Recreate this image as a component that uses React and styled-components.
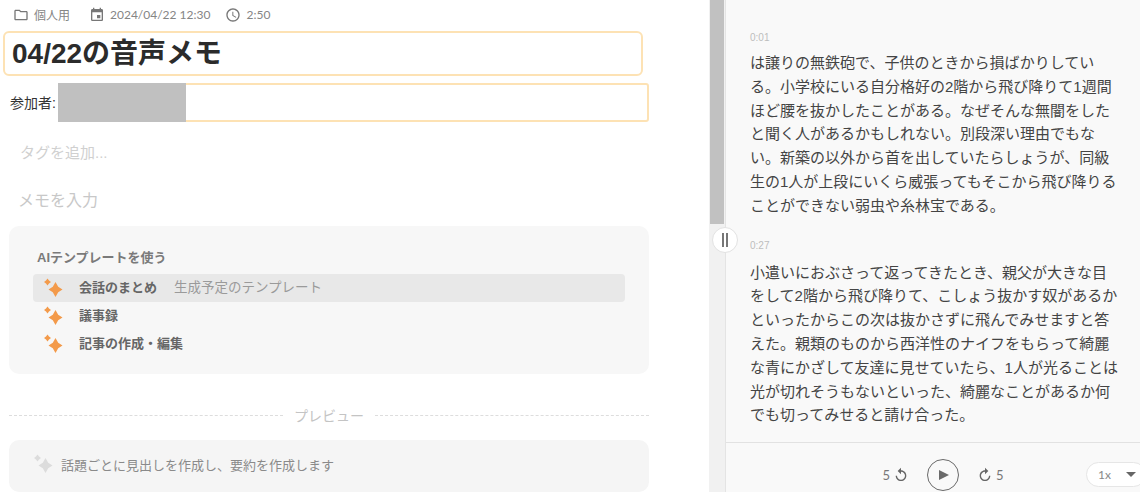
import styled, { createGlobalStyle } from "styled-components";
import { MdOutlineFolder, MdEvent, MdOutlineAccessTime, MdReplay } from "react-icons/md";

const JP = `"Liberation Sans", "Noto Sans CJK JP", sans-serif`;
const LATO = `Lato, "Noto Sans CJK JP", sans-serif`;

const GlobalStyle = createGlobalStyle`
  html, body {
    margin: 0;
    height: 492px;
    overflow: hidden;
    background: #fff;
  }
`;

const Page = styled.div`
  display: flex;
  width: 1140px;
  height: 492px;
  overflow: hidden;
  position: relative;
  font-family: ${JP};
`;

const LeftPane = styled.div`
  flex: 0 0 709px;
  height: 492px;
  overflow: hidden;
  box-sizing: border-box;
  display: flex;
  flex-direction: column;
`;

const MetaRow = styled.div`
  display: flex;
  align-items: center;
  height: 31px;
  padding: 0 0 2px 13px;
  box-sizing: border-box;
  font-family: ${LATO};
  font-size: 12px;
  color: #858585;
`;

const MetaItem = styled.span`
  display: flex;
  align-items: center;
  gap: 5px;
  margin-right: ${(props) => props.$gap || 20}px;

  svg {
    font-size: 16px;
    color: #777;
  }
`;

const TitleBox = styled.div`
  margin-left: 3px;
  width: 640px;
  height: 45px;
  box-sizing: border-box;
  border: 2px solid #fde2b4;
  border-radius: 6px;
  padding: 0 0 5px 7px;
  display: flex;
  align-items: center;
  font-size: 28px;
  font-weight: 700;
  color: #2b2b2b;
`;

const ParticipantRow = styled.div`
  display: flex;
  align-items: center;
  margin-top: 7px;
  padding-left: 10px;
  font-size: 14px;
  color: #333;
`;

const ParticipantLabel = styled.span`
  flex: 0 0 48px;
  padding-bottom: 2px;
  white-space: nowrap;
`;

const ParticipantBox = styled.div`
  position: relative;
  width: 591px;
  height: 39px;
  box-sizing: border-box;
  border: 2px solid #fde2b4;
  border-radius: 3px;
`;

const Redaction = styled.div`
  position: absolute;
  left: -2px;
  top: -2px;
  width: 128px;
  height: 39px;
  background: #c0c0c0;
`;

const TagInput = styled.div`
  margin: 21px 0 0 20px;
  height: 20px;
  line-height: 20px;
  font-size: 15px;
  color: #d0d0d0;
`;

const MemoInput = styled.div`
  margin: 28px 0 0 18px;
  height: 20px;
  line-height: 20px;
  font-size: 16px;
  color: #c8c8c8;
`;

const TemplateCard = styled.div`
  margin: 15px 0 0 9px;
  width: 640px;
  height: 148px;
  box-sizing: border-box;
  padding: 23px 24px 0;
  background: #f7f7f7;
  border-radius: 10px;
`;

const TemplateHeading = styled.div`
  margin-left: 4px;
  height: 18px;
  line-height: 18px;
  font-size: 13px;
  font-weight: 700;
  color: #7a7a7a;
  margin-bottom: 7px;
`;

const TemplateRow = styled.div`
  display: flex;
  align-items: center;
  height: 28px;
  padding-left: 10px;
  border-radius: 4px;
  background: ${(props) => (props.$active ? "#e8e8e8" : "transparent")};
`;

const TemplateName = styled.span`
  margin-left: 16px;
  padding-bottom: 4px;
  font-size: 13px;
  font-weight: 700;
  color: #666;
`;

const TemplateHint = styled.span`
  margin-left: 17px;
  padding-bottom: 4px;
  font-size: 13.5px;
  color: #9a9a9a;
`;

const Divider = styled.div`
  display: flex;
  align-items: center;
  gap: 11px;
  margin: 31px 0 0 9px;
  width: 640px;
  height: 20px;
  font-size: 14px;
  color: #c4c4c4;

  &::before,
  &::after {
    content: "";
    flex: 1;
    border-top: 1px dashed #ddd;
  }
`;

const PreviewCard = styled.div`
  display: flex;
  align-items: center;
  gap: 8px;
  margin: 15px 0 0 9px;
  width: 640px;
  height: 52px;
  flex: 0 0 52px;
  box-sizing: border-box;
  padding: 0 0 4px 24px;
  background: #f5f5f5;
  border-radius: 10px;
  font-size: 13px;
  color: #8a8a8a;
`;

const ScrollTrack = styled.div`
  flex: 0 0 16px;
  height: 492px;
  background: #f1f1f1;
`;

const ScrollThumb = styled.div`
  margin-left: 1px;
  width: 14px;
  height: 224px;
  background: #c1c1c1;
`;

const RightPane = styled.div`
  flex: 0 0 434px;
  height: 492px;
  border-left: 1px solid #e4e4e4;
  background: #f9f9f9;
  display: flex;
  flex-direction: column;
`;

const Transcript = styled.div`
  flex: 1;
  min-height: 0;
  overflow: hidden;
  padding: 31px 0 0 24px;
`;

const Segment = styled.div`
  width: 371px;
  margin-bottom: 21px;
`;

const Timestamp = styled.div`
  height: 14px;
  line-height: 14px;
  font-size: 10px;
  color: #bdbdbd;
  margin-bottom: ${(props) => props.$gap}px;
`;

const SegmentText = styled.p`
  margin: 0;
  font-size: 15px;
  line-height: 23.8px;
  color: #444;
`;

const ResizeHandle = styled.div`
  position: absolute;
  left: 712px;
  top: 227px;
  width: 26px;
  height: 26px;
  box-sizing: border-box;
  border: 1px solid #e2e2e2;
  border-radius: 50%;
  background: #fff;
  display: flex;
  align-items: center;
  justify-content: center;
  gap: 2px;

  i {
    width: 2px;
    height: 14px;
    background: #777;
  }
`;

const PlayerBar = styled.div`
  flex: 0 0 50px;
  box-sizing: border-box;
  border-top: 1px solid #e2e2e2;
  padding-top: 14px;
  position: relative;
  display: flex;
  align-items: center;
  justify-content: center;
  gap: 18px;
  font-family: ${LATO};
  font-size: 13px;
  color: #777;
`;

const SkipGroup = styled.span`
  display: flex;
  align-items: center;
  gap: 3px;

  svg {
    font-size: 16px;
    color: #666;
    transform: ${(props) => (props.$flip ? "scaleX(-1)" : "none")};
  }
`;

const PlayButton = styled.div`
  width: 32px;
  height: 32px;
  box-sizing: border-box;
  border: 1.5px solid #6a6a6a;
  border-radius: 50%;
  display: flex;
  align-items: center;
  justify-content: center;
  padding-left: 2px;

  &::before {
    content: "";
    border-left: 10px solid #6a6a6a;
    border-top: 5.5px solid transparent;
    border-bottom: 5.5px solid transparent;
  }
`;

const SpeedPill = styled.div`
  position: absolute;
  left: 360px;
  top: 19px;
  width: 60px;
  height: 25px;
  box-sizing: border-box;
  border: 1px solid #e6e6e6;
  border-radius: 13px;
  background: #fff;
  display: flex;
  align-items: center;
  padding-left: 11px;
  gap: 15px;
  font-size: 12px;
  color: #888;

  &::after {
    content: "";
    border-top: 5px solid #666;
    border-left: 5px solid transparent;
    border-right: 5px solid transparent;
  }
`;

const Sparkle = ({ color }) => (
  <svg width="20" height="20" viewBox="0 0 20 20" style={{ flex: "none" }}>
    <path d="M12.5 4 L15.2 8.8 L19.5 11.5 L15.2 14.2 L12.5 19 L9.8 14.2 L5.5 11.5 L9.8 8.8 Z" fill={color} />
    <path d="M4.5 .5 L6 2.5 L8 4 L6 5.5 L4.5 7.5 L3 5.5 L1 4 L3 2.5 Z" fill={color} />
  </svg>
);

const templates = [
  { name: "会話のまとめ", hint: "生成予定のテンプレート", active: true },
  { name: "議事録" },
  { name: "記事の作成・編集" },
];

const segments = [
  {
    time: "0:01",
    gap: 6,
    text: "は譲りの無鉄砲で、子供のときから損ばかりしている。小学校にいる自分格好の2階から飛び降りて1週間ほど腰を抜かしたことがある。なぜそんな無闇をしたと聞く人があるかもしれない。別段深い理由でもない。新築の以外から首を出していたらしょうが、同級生の1人が上段にいくら威張ってもそこから飛び降りることができない弱虫や糸林宝である。",
  },
  {
    time: "0:27",
    gap: 8,
    text: "小遣いにおぶさって返ってきたとき、親父が大きな目をして2階から飛び降りて、こしょう抜かす奴があるかといったからこの次は抜かさずに飛んでみせますと答えた。親類のものから西洋性のナイフをもらって綺麗な青にかざして友達に見せていたら、1人が光ることは光が切れそうもないといった、綺麗なことがあるか何でも切ってみせると請け合った。",
  },
];

export default function App() {
  return (
    <Page>
      <GlobalStyle />
      <LeftPane>
        <MetaRow>
          <MetaItem $gap={19}>
            <MdOutlineFolder />
            個人用
          </MetaItem>
          <MetaItem $gap={15}>
            <MdEvent />
            2024/04/22 12:30
          </MetaItem>
          <MetaItem>
            <MdOutlineAccessTime />
            2:50
          </MetaItem>
        </MetaRow>
        <TitleBox>04/22の音声メモ</TitleBox>
        <ParticipantRow>
          <ParticipantLabel>参加者:</ParticipantLabel>
          <ParticipantBox>
            <Redaction />
          </ParticipantBox>
        </ParticipantRow>
        <TagInput>タグを追加...</TagInput>
        <MemoInput>メモを入力</MemoInput>
        <TemplateCard>
          <TemplateHeading>AIテンプレートを使う</TemplateHeading>
          {templates.map((item) => (
            <TemplateRow key={item.name} $active={item.active}>
              <Sparkle color="#f39a4a" />
              <TemplateName>{item.name}</TemplateName>
              {item.hint && <TemplateHint>{item.hint}</TemplateHint>}
            </TemplateRow>
          ))}
        </TemplateCard>
        <Divider>プレビュー</Divider>
        <PreviewCard>
          <Sparkle color="#dcdcdc" />
          話題ごとに見出しを作成し、要約を作成します
        </PreviewCard>
      </LeftPane>
      <ScrollTrack>
        <ScrollThumb />
      </ScrollTrack>
      <RightPane>
        <Transcript>
          {segments.map((segment) => (
            <Segment key={segment.time}>
              <Timestamp $gap={segment.gap}>{segment.time}</Timestamp>
              <SegmentText>{segment.text}</SegmentText>
            </Segment>
          ))}
        </Transcript>
        <PlayerBar>
          <SkipGroup>
            5
            <MdReplay />
          </SkipGroup>
          <PlayButton />
          <SkipGroup $flip>
            <MdReplay />
            5
          </SkipGroup>
          <SpeedPill>1x</SpeedPill>
        </PlayerBar>
      </RightPane>
      <ResizeHandle>
        <i />
        <i />
      </ResizeHandle>
    </Page>
  );
}
